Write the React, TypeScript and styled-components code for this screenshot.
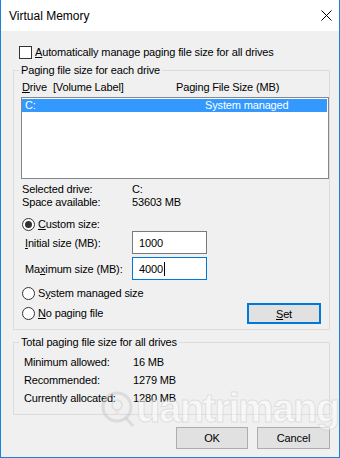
import React from 'react';
import styled, { createGlobalStyle } from 'styled-components';

const GlobalStyle = createGlobalStyle`
  html, body {
    margin: 0;
    padding: 0;
    background: #ffffff;
  }
  body {
    font-family: 'Liberation Sans', Arial, sans-serif;
    font-size: 11px;
    letter-spacing: -0.15px;
    color: #000;
  }
`;

const Window = styled.div`
  position: relative;
  width: 340px;
  height: 458px;
  box-sizing: border-box;
  border: 1px solid #1883d7;
  border-top: none;
  background: #f0f0f0;
  display: flex;
  flex-direction: column;
  overflow: hidden;
`;

const TitleBar = styled.div`
  height: 31px;
  flex-shrink: 0;
  background: #fff;
  display: flex;
  align-items: center;
  padding-left: 8px;
  font-size: 12px;
  letter-spacing: 0;
`;

const Close = styled.div`
  margin-left: auto;
  width: 26px;
  height: 31px;
  display: flex;
  align-items: center;
  justify-content: center;
`;

const Body = styled.div`
  display: flex;
  flex-direction: column;
  padding: 0 9px 0 12px;
`;

const CheckRow = styled.label`
  margin: 15px 0 0 6px;
  height: 13px;
  display: flex;
  align-items: center;
  gap: 3px;
  line-height: 13px;
`;

const Box = styled.span`
  width: 13px;
  height: 13px;
  box-sizing: border-box;
  border: 1px solid #333;
  background: #fff;
`;

const Group = styled.div<{ $mt: number; $pb: number }>`
  margin-top: ${(p) => p.$mt}px;
  border: 1px solid #dcdcdc;
  display: flex;
  flex-direction: column;
  padding: 0 0 ${(p) => p.$pb}px 7px;
`;

const Legend = styled.span`
  align-self: flex-start;
  margin: -7px 0 0 -2px;
  padding: 0 2px;
  height: 13px;
  line-height: 13px;
  background: #f0f0f0;
`;

const Header = styled.div`
  margin-top: 4px;
  padding-left: 1px;
  display: grid;
  grid-template-columns: 154px 1fr;
  line-height: 13px;
`;

const HeaderGap = styled.span`
  margin-right: 6px;
`;

const ListBox = styled.div`
  margin-top: 3px;
  height: 82px;
  box-sizing: border-box;
  border: 1px solid #828790;
  background: #fff;
  padding: 1px 1px 0 0;
`;

const ListRow = styled.div<{ $selected?: boolean }>`
  height: 13px;
  line-height: 13px;
  display: grid;
  grid-template-columns: 180px 1fr;
  padding-left: 3px;
  background: ${(p) => (p.$selected ? '#3399ff' : 'transparent')};
  color: ${(p) => (p.$selected ? '#fff' : '#000')};
`;

const InfoGrid = styled.div<{ $mt: number; $pl: number; $col: number; $lh: number }>`
  margin-top: ${(p) => p.$mt}px;
  padding-left: ${(p) => p.$pl}px;
  display: grid;
  grid-template-columns: ${(p) => p.$col}px 1fr;
  line-height: ${(p) => p.$lh}px;
`;

const RadioRow = styled.label<{ $mt?: number }>`
  margin: ${(p) => p.$mt ?? 0}px 0 0 1px;
  height: 13px;
  display: flex;
  align-items: center;
  gap: 3px;
  line-height: 13px;
`;

const Radio = styled.span<{ $checked?: boolean }>`
  width: 13px;
  height: 13px;
  box-sizing: border-box;
  border: 1px solid #333;
  border-radius: 50%;
  background: #fff;
  display: flex;
  align-items: center;
  justify-content: center;
  &::after {
    content: '';
    width: 7px;
    height: 7px;
    border-radius: 50%;
    background: ${(p) => (p.$checked ? '#333' : 'transparent')};
  }
`;

const SizeRow = styled.div<{ $mt: number }>`
  margin-top: ${(p) => p.$mt}px;
  padding-left: 4px;
  height: 23px;
  display: grid;
  grid-template-columns: 107px 75px;
  align-items: center;
`;

const Input = styled.div<{ $focused?: boolean }>`
  height: 23px;
  box-sizing: border-box;
  border: 1px solid ${(p) => (p.$focused ? '#0078d7' : '#7a7a7a')};
  background: #fff;
  padding-left: 6px;
  display: flex;
  align-items: center;
`;

const Caret = styled.span`
  width: 1px;
  height: 14px;
  margin-left: 1px;
  background: #000;
`;

const SetRow = styled.div`
  margin-top: 3px;
  height: 21px;
  display: flex;
  align-items: center;
  justify-content: space-between;
  padding-right: 8px;
`;

const Button = styled.div<{ $w: number; $h: number; $default?: boolean }>`
  width: ${(p) => p.$w}px;
  height: ${(p) => p.$h}px;
  box-sizing: border-box;
  border: ${(p) => (p.$default ? '2px solid #0078d7' : '1px solid #adadad')};
  background: #e1e1e1;
  display: flex;
  align-items: center;
  justify-content: center;
`;

const Footer = styled.div`
  margin-top: 12px;
  display: flex;
  justify-content: flex-end;
  gap: 9px;
`;

const Watermark = styled.div`
  position: absolute;
  left: 100px;
  top: 386px;
  display: flex;
  align-items: center;
  gap: 1px;
  pointer-events: none;
  font-family: 'Liberation Sans', Arial, sans-serif;
  font-size: 40px;
  font-weight: bold;
  letter-spacing: -1.5px;
  color: rgba(255, 255, 255, 0.55);
  -webkit-text-stroke: 1px rgba(190, 190, 190, 0.4);
`;

const Key = styled.span`
  text-decoration: underline;
`;

const CloseIcon = () => (
  <svg width="11" height="11" viewBox="0 0 11 11">
    <path d="M0.5 0.5 L10.5 10.5 M10.5 0.5 L0.5 10.5" stroke="#000" strokeWidth="1" />
  </svg>
);

const WatermarkLogo = () => (
  <svg width="34" height="38" viewBox="0 0 34 38">
    <circle cx="16" cy="17" r="14" fill="none" stroke="rgba(200,200,200,0.5)" strokeWidth="3" />
    <path d="M25 28 L32 36" stroke="rgba(200,200,200,0.5)" strokeWidth="3" />
    <circle cx="16" cy="15" r="5" fill="none" stroke="rgba(200,200,200,0.45)" strokeWidth="1.5" />
    <path d="M14 21 h4 M14 23 h4" stroke="rgba(200,200,200,0.45)" strokeWidth="1" />
  </svg>
);

export default function App() {
  return (
    <>
      <GlobalStyle />
      <Window>
        <TitleBar>
          Virtual Memory
          <Close>
            <CloseIcon />
          </Close>
        </TitleBar>
        <Body>
          <CheckRow>
            <Box />
            <span>
              <Key>A</Key>utomatically manage paging file size for all drives
            </span>
          </CheckRow>

          <Group $mt={11} $pb={5}>
            <Legend>Paging file size for each drive</Legend>
            <Header>
              <span>
                <HeaderGap>
                  <Key>D</Key>rive
                </HeaderGap>
                [Volume Label]
              </span>
              <span>Paging File Size (MB)</span>
            </Header>
            <ListBox>
              <ListRow $selected>
                <span>C:</span>
                <span>System managed</span>
              </ListRow>
            </ListBox>

            <InfoGrid $mt={4} $pl={1} $col={110} $lh={13}>
              <span>Selected drive:</span>
              <span>C:</span>
              <span>Space available:</span>
              <span>53603 MB</span>
            </InfoGrid>

            <RadioRow $mt={9}>
              <Radio $checked />
              <span>
                <Key>C</Key>ustom size:
              </span>
            </RadioRow>
            <SizeRow $mt={0}>
              <span>
                <Key>I</Key>nitial size (MB):
              </span>
              <Input>1000</Input>
            </SizeRow>
            <SizeRow $mt={3}>
              <span>
                Ma<Key>x</Key>imum size (MB):
              </span>
              <Input $focused>
                4000
                <Caret />
              </Input>
            </SizeRow>
            <RadioRow $mt={7}>
              <Radio />
              <span>
                S<Key>y</Key>stem managed size
              </span>
            </RadioRow>
            <SetRow>
              <RadioRow>
                <Radio />
                <span>
                  <Key>N</Key>o paging file
                </span>
              </RadioRow>
              <Button $w={74} $h={21} $default>
                <span>
                  <Key>S</Key>et
                </span>
              </Button>
            </SetRow>
          </Group>

          <Group $mt={12} $pb={7}>
            <Legend>Total paging file size for all drives</Legend>
            <InfoGrid $mt={4} $pl={3} $col={109} $lh={18}>
              <span>Minimum allowed:</span>
              <span>16 MB</span>
              <span>Recommended:</span>
              <span>1279 MB</span>
              <span>Currently allocated:</span>
              <span>1280 MB</span>
            </InfoGrid>
          </Group>

          <Footer>
            <Button $w={72} $h={22}>OK</Button>
            <Button $w={73} $h={22}>Cancel</Button>
          </Footer>
        </Body>
        <Watermark>
          <WatermarkLogo />
          <span>uantrimang</span>
        </Watermark>
      </Window>
    </>
  );
}
